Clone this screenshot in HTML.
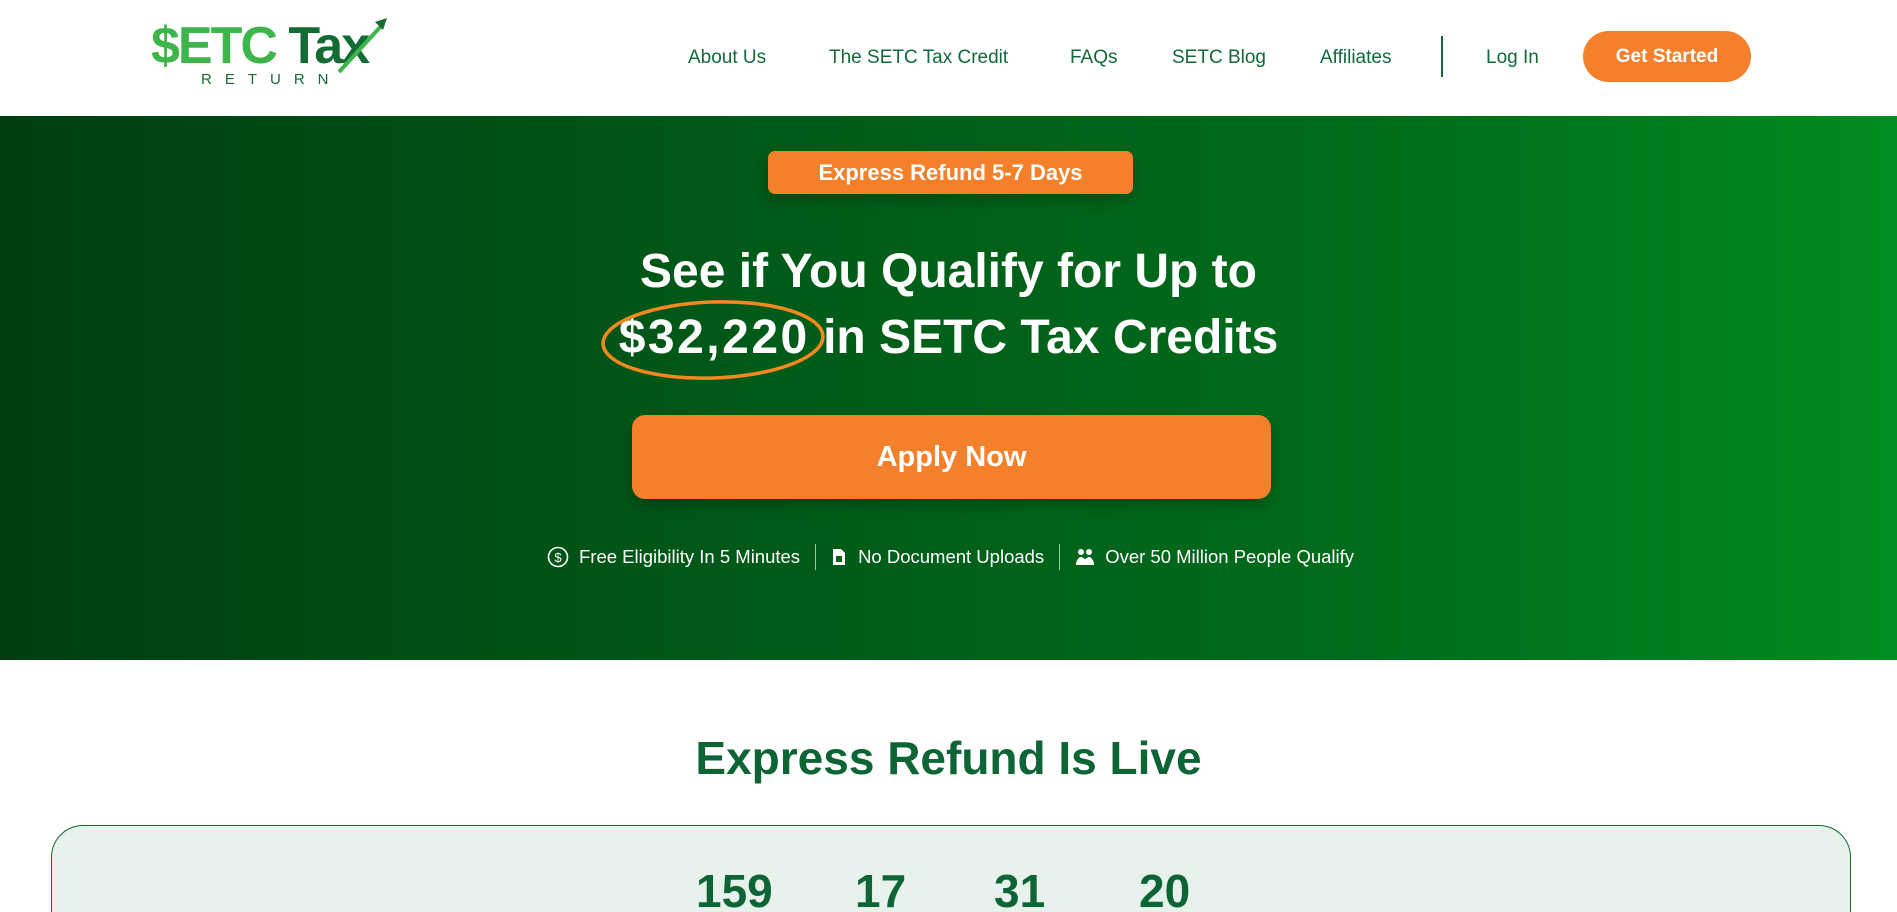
<!DOCTYPE html>
<html style="overflow:hidden;height:912px"><head><meta charset="utf-8"><style>
*{margin:0;padding:0;box-sizing:border-box}
body{width:1897px;height:912px;overflow:hidden;font-family:"Liberation Sans",sans-serif;background:#fff;position:relative}
.abs{position:absolute}
header{position:absolute;left:0;top:0;width:1897px;height:116px;background:#fff}
.nav{position:absolute;top:47px;font-size:19px;color:#13683a;white-space:nowrap}
.hero{position:absolute;left:0;top:116px;width:1897px;height:544px;background:linear-gradient(90deg,#003e12 0%,#005a18 40%,#006e1b 75%,#008c20 100%)}
.c{left:0;width:1897px;text-align:center;color:#fff;font-weight:bold}
</style></head><body>
<header>
 <div class="abs" style="left:151px;top:14px;width:240px;height:76px">
  <div class="abs" style="left:0;top:4px;font-size:52px;font-weight:bold;letter-spacing:-2px;line-height:56px;color:#3db54a">$ETC<span style="color:#156b34"> Tax</span></div>
  <svg class="abs" style="left:180px;top:2px" width="60" height="60" viewBox="0 0 60 60"><path d="M8 56 L52 8" stroke="#3db54a" stroke-width="4" fill="none"/><path d="M44 6 L56 2 L52 14 Z" fill="#156b34"/></svg>
  <div class="abs" style="left:50px;top:57px;font-size:15px;letter-spacing:13px;color:#156b34">RETURN</div>
 </div>
 <div class="nav" style="left:688px">About Us</div>
 <div class="nav" style="left:829px">The SETC Tax Credit</div>
 <div class="nav" style="left:1070px">FAQs</div>
 <div class="nav" style="left:1172px">SETC Blog</div>
 <div class="nav" style="left:1320px">Affiliates</div>
 <div class="abs" style="left:1441px;top:36px;width:2px;height:41px;background:#13683a"></div>
 <div class="nav" style="left:1486px">Log In</div>
 <div class="abs" style="left:1583px;top:31px;width:168px;height:51px;border-radius:26px;background:#f5802b;color:#fff;font-size:19px;font-weight:bold;text-align:center;line-height:51px">Get Started</div>
</header>
<div class="hero"></div>
<div class="abs" style="left:768px;top:151px;width:365px;height:43px;background:#f5802b;border-radius:7px;color:#fff;font-weight:bold;font-size:22px;text-align:center;line-height:43px;box-shadow:0 6px 14px rgba(0,0,0,.25)">Express Refund 5-7 Days</div>
<div class="abs c" style="top:243px;font-size:48px;line-height:58px">See if You Qualify for Up to</div>
<div class="abs c" style="top:309px;font-size:48px;line-height:58px"><span style="letter-spacing:2.5px">$32,220</span> in SETC Tax Credits</div>
<svg class="abs" style="left:600px;top:296px" width="236" height="88"><ellipse cx="113" cy="44" rx="110" ry="38" fill="none" stroke="#f5881f" stroke-width="3.5" transform="rotate(-2 113 44)"/></svg>
<div class="abs" style="left:632px;top:415px;width:639px;height:84px;background:#f5802b;border-radius:13px;color:#fff;font-weight:bold;font-size:29px;text-align:center;line-height:84px;box-shadow:0 6px 14px rgba(0,0,0,.25)">Apply Now</div>
<div class="abs" style="left:547px;top:544px;height:26px;color:#fff;font-size:18.5px;line-height:26px;white-space:nowrap;display:flex;align-items:center">
 <svg width="22" height="22" viewBox="0 0 22 22"><circle cx="11" cy="11" r="9.5" fill="none" stroke="#fff" stroke-width="1.6"/><text x="11" y="16" font-size="13" fill="#fff" text-anchor="middle" font-family="Liberation Sans">$</text></svg>
 <span style="margin-left:10px">Free Eligibility In 5 Minutes</span>
 <span style="width:1px;height:26px;background:#9fc7a8;margin:0 15px"></span>
 <svg width="16" height="20" viewBox="0 0 16 20"><path d="M2 2h8l4 4v12H2z" fill="#fff"/><rect x="5" y="9" width="6" height="6" fill="#0a5e1a"/></svg>
 <span style="margin-left:11px">No Document Uploads</span>
 <span style="width:1px;height:26px;background:#9fc7a8;margin:0 15px"></span>
 <svg width="20" height="20" viewBox="0 0 20 20"><circle cx="6" cy="5" r="3" fill="#fff"/><circle cx="14" cy="5" r="3" fill="#fff"/><path d="M1 18c0-5 3-8 5-8s3 2 4 2 2-2 4-2 5 3 5 8z" fill="#fff"/></svg>
 <span style="margin-left:10px">Over 50 Million People Qualify</span>
</div>
<div class="abs" style="left:0;width:1897px;top:729px;text-align:center;font-size:46px;font-weight:bold;color:#0d6535;line-height:58px">Express Refund Is Live</div>
<div class="abs" style="left:51px;top:825px;width:1800px;height:87px;background:#e8f2ec;border:1.5px solid #156b34;border-bottom:none;border-radius:32px 32px 0 0"></div>
<div class="abs" style="top:864px;left:0;width:1897px;height:48px;overflow:hidden;font-size:46px;font-weight:bold;color:#0d6535">
 <span class="abs" style="left:696px">159</span><span class="abs" style="left:855px">17</span><span class="abs" style="left:994px">31</span><span class="abs" style="left:1139px">20</span>
</div>
</body></html>
